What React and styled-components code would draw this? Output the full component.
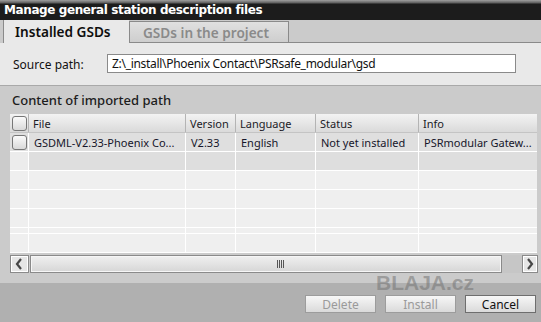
import React from 'react';
import styled, { createGlobalStyle } from 'styled-components';

const Global = createGlobalStyle`
  html, body { margin: 0; padding: 0; }
  body {
    width: 541px;
    height: 322px;
    overflow: hidden;
    background: #b0b0b0;
    font-family: "Noto Sans", "Liberation Sans", sans-serif;
  }
`;

const Window = styled.div`
  position: relative;
  width: 541px;
  height: 322px;
  display: flex;
  flex-direction: column;
  background: #b0b0b0;
`;

const TitleBar = styled.div`
  height: 20px;
  box-sizing: border-box;
  padding: 3px 0 0 4px;
  background: linear-gradient(#a0a0a0 0px, #5c5c5c 3px, #1c1c1c 4px, #1c1c1c 100%);
  color: #ffffff;
  font: bold 12px/15px "DejaVu Sans", sans-serif;
  letter-spacing: -0.4px;
  white-space: nowrap;
`;

const TabStrip = styled.div`
  height: 23px;
  display: flex;
  align-items: flex-end;
  padding-left: 3px;
  background: #cbcbcb;
`;

const Tab = styled.div`
  box-sizing: border-box;
  width: ${(p) => p.$w}px;
  height: ${(p) => (p.$active ? 23 : 22)}px;
  display: flex;
  align-items: center;
  padding-left: ${(p) => (p.$active ? 11 : 13)}px;
  font: 600 13.6px "Noto Sans", sans-serif;
  white-space: nowrap;
  color: ${(p) => (p.$active ? '#0e0e0e' : '#8a8a8a')};
  background: ${(p) => (p.$active ? '#e9e9e9' : 'linear-gradient(#e0e0e0, #cecece)')};
  border-left: 1px solid #8a8a8a;
  border-top: ${(p) => (p.$active ? 'none' : '1px solid #8a8a8a')};
  border-right: ${(p) => (p.$active ? 'none' : '1px solid #8a8a8a')};
  border-bottom: ${(p) => (p.$active ? 'none' : '1px solid #8a8a8a')};
`;

const TabFiller = styled.div`
  flex: 1;
  height: 23px;
  box-sizing: border-box;
  border-bottom: 1px solid #8a8a8a;
`;

const SourceRow = styled.div`
  height: 42px;
  display: flex;
  align-items: center;
  padding-left: 13px;
  background: #e9e9e9;
`;

const Label = styled.div`
  width: 94px;
  font-size: 12px;
  color: #111;
  white-space: nowrap;
`;

const PathInput = styled.div`
  box-sizing: border-box;
  width: 409px;
  height: 19px;
  margin-top: -1px;
  padding-left: 4px;
  display: flex;
  align-items: center;
  background: #ffffff;
  border: 1px solid #8a8a8a;
  font-size: 12px;
  letter-spacing: -0.3px;
  color: #111;
  white-space: nowrap;
`;

const Section = styled.div`
  height: 198px;
  box-sizing: border-box;
  border-top: 1px solid #a9a9a9;
  background: #cbcbcb;
  padding: 0 4px 0 10px;
  display: flex;
  flex-direction: column;
`;

const SectionTitle = styled.div`
  height: 28px;
  padding-left: 2px;
  display: flex;
  align-items: center;
  font: 500 13px "Noto Sans", sans-serif;
  color: #1c1c1c;
  white-space: nowrap;
`;

const cols = '19px 157px 50px 80px 103px 118px';

const HeaderRow = styled.div`
  display: grid;
  grid-template-columns: ${cols};
  height: 19px;
  box-sizing: border-box;
  background: linear-gradient(#f3f3f3, #dadada);
  border-bottom: 1px solid #c4c4c4;
`;

const HeaderCell = styled.div`
  display: flex;
  align-items: center;
  padding-left: ${(p) => (p.$check ? 2 : 4)}px;
  box-sizing: border-box;
  border-right: ${(p) => (p.$last ? 'none' : '1px solid #b4b4b4')};
  font-size: 11px;
  color: #1b1b26;
  white-space: nowrap;
  overflow: hidden;
`;

const BodyRow = styled.div`
  display: grid;
  grid-template-columns: ${cols};
  height: ${(p) => p.$h}px;
  box-sizing: border-box;
  border-bottom: 1px solid #ffffff;
`;

const Cell = styled.div`
  display: flex;
  align-items: center;
  box-sizing: border-box;
  padding-left: ${(p) => (p.$check ? 2 : 5)}px;
  border-right: ${(p) => (p.$last ? 'none' : '1px solid #ffffff')};
  background: ${(p) => p.$bg};
  font-size: 11px;
  color: #16162a;
  white-space: nowrap;
  overflow: hidden;
`;

const Checkbox = styled.div`
  width: 15px;
  height: 15px;
  box-sizing: border-box;
  border: 1px solid #777;
  border-radius: 3px;
  background: linear-gradient(#fbfbfb, #d9d9d9);
`;

const ScrollBar = styled.div`
  margin-top: 2px;
  height: 18px;
  display: flex;
  width: 528px;
`;

const ScrollButton = styled.div`
  box-sizing: border-box;
  width: ${(p) => p.$w}px;
  height: 18px;
  border: 1px solid #8a8a8a;
  box-shadow: inset 0 0 0 1px #ffffff;
  background: #e6e6e6;
  display: flex;
  align-items: center;
  justify-content: center;
`;

const Thumb = styled.div`
  box-sizing: border-box;
  width: 473px;
  height: 18px;
  margin-left: 1px;
  border: 1px solid #8a8a8a;
  box-shadow: inset 0 0 0 1px #f6f6f6;
  background: linear-gradient(#f0f0f0, #d6d6d6);
  display: flex;
  align-items: center;
  padding-left: 246px;
`;

const Grip = styled.div`
  display: flex;
  gap: 1px;
`;

const GripLine = styled.div`
  width: 1px;
  height: 8px;
  background: #555;
`;

const TrackGap = styled.div`
  width: 20px;
  height: 18px;
  background: #c6c6c6;
`;

const Footer = styled.div`
  flex: 1;
  display: flex;
  justify-content: flex-end;
  align-items: flex-start;
  gap: 9px;
  padding: 12px 5px 0 0;
  background: #b0b0b0;
`;

const Button = styled.div`
  box-sizing: border-box;
  width: 71px;
  height: 18px;
  display: flex;
  align-items: center;
  justify-content: center;
  border: 1px solid ${(p) => (p.$disabled ? '#9c9c9c' : '#6e6e6e')};
  background: linear-gradient(#f7f7f7, #dadada);
  font-size: 12px;
  color: ${(p) => (p.$disabled ? '#9a9a9a' : '#111')};
`;

const Watermark = styled.div`
  position: absolute;
  left: 376px;
  top: 272px;
  font: bold 21px/21px "Liberation Sans", sans-serif;
  color: rgba(110, 110, 110, 0.5);
  pointer-events: none;
`;

const Chevron = ({ dir }) => (
  <svg width="8" height="12" viewBox="0 0 8 12">
    <polyline
      points={dir === 'left' ? '6,1 2,6 6,11' : '2,1 6,6 2,11'}
      fill="none"
      stroke="#474747"
      strokeWidth="2.2"
    />
  </svg>
);

const rows = [
  { h: 19, data: true, bg: '#dfdfdf', checkBg: '#dfdfdf' },
  { h: 19, bg: '#dedede', checkBg: '#ececec' },
  { h: 19, bg: '#efefef', checkBg: '#efefef' },
  { h: 19, bg: '#efefef', checkBg: '#efefef' },
  { h: 19, bg: '#efefef', checkBg: '#efefef' },
  { h: 6, bg: '#efefef', checkBg: '#efefef' },
  { h: 19, bg: '#efefef', checkBg: '#efefef' },
];

const headers = ['File', 'Version', 'Language', 'Status', 'Info'];
const dataRow = ['GSDML-V2.33-Phoenix Co...', 'V2.33', 'English', 'Not yet installed', 'PSRmodular Gatew...'];

export default function App() {
  return (
    <>
      <Global />
      <Window>
        <TitleBar>Manage general station description files</TitleBar>
        <TabStrip>
          <Tab $active $w={126}>Installed GSDs</Tab>
          <Tab $w={160}>GSDs in the project</Tab>
          <TabFiller />
        </TabStrip>
        <SourceRow>
          <Label>Source path:</Label>
          <PathInput>Z:\_install\Phoenix Contact\PSRsafe_modular\gsd</PathInput>
        </SourceRow>
        <Section>
          <SectionTitle>Content of imported path</SectionTitle>
          <div>
            <HeaderRow>
              <HeaderCell $check>
                <Checkbox />
              </HeaderCell>
              {headers.map((h, i) => (
                <HeaderCell key={h} $last={i === headers.length - 1}>
                  {h}
                </HeaderCell>
              ))}
            </HeaderRow>
            {rows.map((r, ri) => (
              <BodyRow key={ri} $h={r.h}>
                <Cell $check $bg={r.checkBg}>
                  {r.data && <Checkbox />}
                </Cell>
                {dataRow.map((t, i) => (
                  <Cell key={i} $bg={r.bg} $last={i === dataRow.length - 1}>
                    {r.data ? t : ''}
                  </Cell>
                ))}
              </BodyRow>
            ))}
          </div>
          <ScrollBar>
            <ScrollButton $w={19}>
              <Chevron dir="left" />
            </ScrollButton>
            <Thumb>
              <Grip>
                <GripLine />
                <GripLine />
                <GripLine />
                <GripLine />
              </Grip>
            </Thumb>
            <TrackGap />
            <ScrollButton $w={16}>
              <Chevron dir="right" />
            </ScrollButton>
          </ScrollBar>
        </Section>
        <Footer>
          <Button $disabled>Delete</Button>
          <Button $disabled>Install</Button>
          <Button>Cancel</Button>
        </Footer>
        <Watermark>BLAJA.cz</Watermark>
      </Window>
    </>
  );
}
